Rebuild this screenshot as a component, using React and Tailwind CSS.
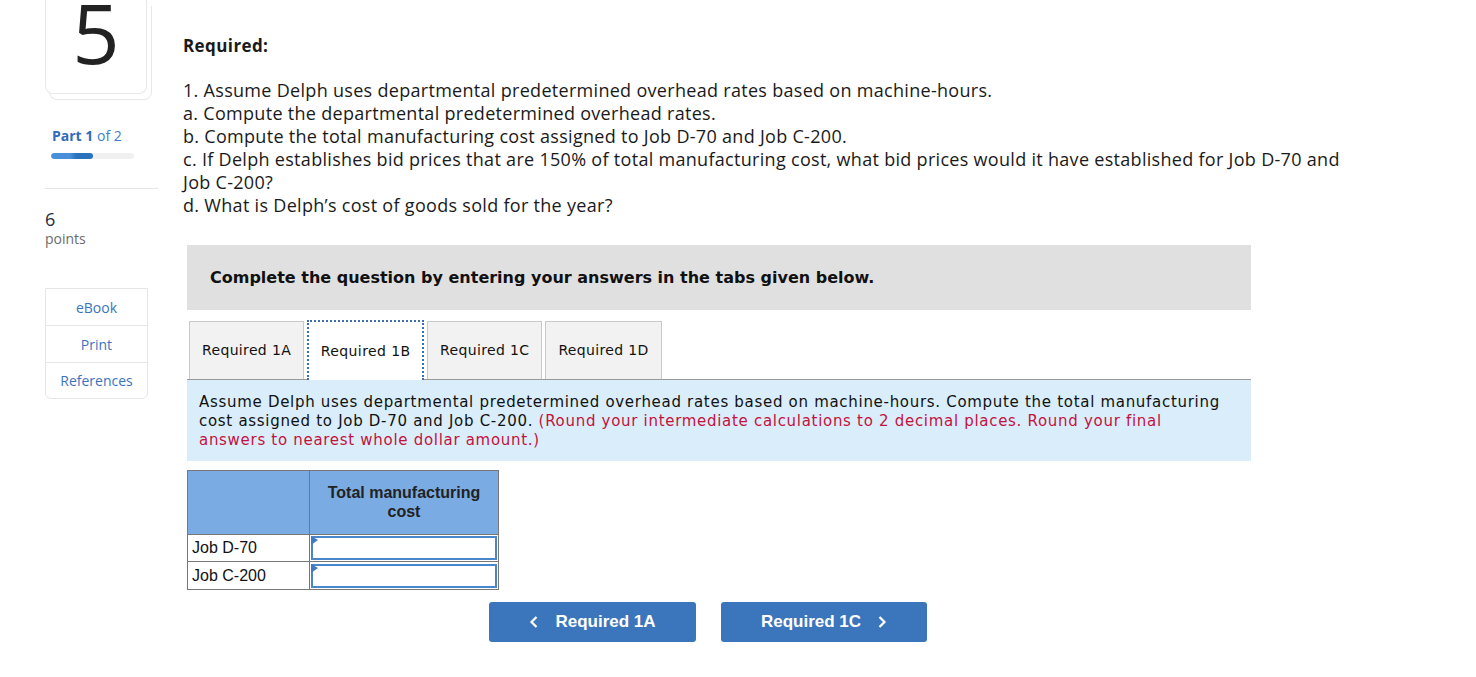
import React from "react";

const proxima = { fontFamily: "'Open Sans', Lato, sans-serif" };

function Sidebar() {
  return (
    <div className="w-[113px] shrink-0 flex flex-col" style={proxima}>
      <div className="relative w-[103px] h-[94px]">
        <div className="absolute left-[4px] top-[6px] w-[103px] h-[94px] border border-t-0 border-[#e8e8e8] rounded-b-[8px] bg-white"></div>
        <div className="absolute left-0 top-0 w-[102px] h-[94px] border border-t-0 border-[#e8e8e8] rounded-b-[8px] bg-white flex items-start justify-center">
          <span className="text-[83px] leading-[64px] text-[#222] font-normal">5</span>
        </div>
      </div>
      <div className="mt-[33px] pl-[7px] text-[14px] leading-[18px] text-[#3d7fcc]">
        <span className="font-bold text-[#2f6cb9]">Part 1</span> of 2
      </div>
      <div className="ml-[6px] mt-[8px] w-[83px] h-[6px] rounded-full bg-[#f0f0f0] overflow-hidden">
        <div className="h-full w-[42px] rounded-full bg-[linear-gradient(90deg,#4a90d9_0%,#4a90d9_45%,#2a72bd_60%,#2a72bd_100%)]"></div>
      </div>
      <div className="mt-[29px] h-px w-[113px] bg-[#e6e6e6]"></div>
      <div className="mt-[19px] text-[18px] leading-[22px] text-[#1f2a44]">6</div>
      <div className="text-[14px] leading-[18px] text-[#6b6b6b]">points</div>
      <div className="mt-[40px] w-[103px] border border-[#e6e6e6] rounded-b-[6px] text-[14px] text-[#3a74c0]">
        <div className="h-[37px] flex items-center justify-center border-b border-[#e6e6e6]">eBook</div>
        <div className="h-[37px] flex items-center justify-center border-b border-[#e6e6e6]">Print</div>
        <div className="h-[35px] flex items-center justify-center">References</div>
      </div>
    </div>
  );
}

function Tab({ label, active }) {
  if (active) {
    return (
      <div className="h-[60px] w-[117px] mb-[-1px] bg-white border-2 border-dotted border-[#3a6fb0] border-b-0 flex items-center justify-center text-[14px] tracking-[0.4px] text-[#111] relative z-10">
        {label}
      </div>
    );
  }
  return (
    <div className="h-[58px] px-[12px] bg-[#f2f2f2] border border-[#c9c9c9] border-b-0 flex items-center justify-center text-[14px] tracking-[0.35px] text-[#111]">
      {label}
    </div>
  );
}

function InputCell() {
  return (
    <td className="p-0 border border-[#777] bg-white">
      <div className="relative h-[24px] m-[1px] border-2 border-[#4a86cc] bg-white">
        <svg className="absolute left-[-2px] top-[-2px]" width="8" height="10" viewBox="0 0 8 10">
          <polygon points="0,0 7,4 0,9" fill="#3f7bc4" />
        </svg>
      </div>
    </td>
  );
}

export default function App() {
  const verdana = { fontFamily: "Verdana, 'DejaVu Sans', sans-serif" };
  const arial = { fontFamily: "'Liberation Sans', Arial, sans-serif" };
  return (
    <div className="w-[1476px] h-[677px] bg-white overflow-hidden flex pl-[45px]">
      <Sidebar />
      <div className="ml-[25px] flex-1 flex flex-col">
        <div style={proxima} className="text-[#1a1a1a]">
          <div className="mt-[34px] text-[17px] leading-[24px] font-bold tracking-[0.4px]">Required:</div>
          <div className="mt-[21px] text-[18px] leading-[23px] tracking-[0.3px] w-[1175px]">
            <div>1. Assume Delph uses departmental predetermined overhead rates based on machine-hours.</div>
            <div>a. Compute the departmental predetermined overhead rates.</div>
            <div>b. Compute the total manufacturing cost assigned to Job D-70 and Job C-200.</div>
            <div>c. If Delph establishes bid prices that are 150% of total manufacturing cost, what bid prices would it have established for Job D-70 and <span className="whitespace-nowrap">Job C-200?</span></div>
            <div>d. What is Delph’s cost of goods sold for the year?</div>
          </div>
        </div>
        <div className="ml-[4px] w-[1064px]" style={verdana}>
          <div className="mt-[28px] h-[65px] bg-[#e0e0e0] flex items-center pl-[23px] text-[16px] font-bold text-[#111]">
            Complete the question by entering your answers in the tabs given below.
          </div>
          <div className="mt-[10px] flex items-end gap-[3px] pl-[2px] border-b border-[#999]">
            <Tab label="Required 1A" />
            <Tab label="Required 1B" active />
            <Tab label="Required 1C" />
            <Tab label="Required 1D" />
          </div>
          <div className="bg-[#daedfa] pt-[13px] pb-[11px] pl-[12px] pr-[20px] text-[15px] leading-[19px] tracking-[0.7px] text-[#111]">
            Assume Delph uses departmental predetermined overhead rates based on machine-hours. Compute the total manufacturing cost assigned to Job D-70 and Job C-200.{" "}
            <span className="text-[#c4123e]">(Round your intermediate calculations to 2 decimal places. Round your final answers to nearest whole dollar amount.)</span>
          </div>
          <table className="mt-[9px] border-collapse" style={arial}>
            <thead>
              <tr className="h-[64px] bg-[#7aabe3]">
                <th className="w-[122px] border border-[#777]"></th>
                <th className="w-[189px] border border-[#777] text-[16px] leading-[19px] font-bold text-[#222] align-top pt-[12px]">
                  Total manufacturing<br />cost
                </th>
              </tr>
            </thead>
            <tbody>
              <tr className="h-[27px]">
                <td className="border border-[#777] text-[16px] leading-[18px] text-[#111] pl-[4px]">Job D-70</td>
                <InputCell />
              </tr>
              <tr className="h-[28px]">
                <td className="border border-[#777] text-[16px] leading-[18px] text-[#111] pl-[4px]">Job C-200</td>
                <InputCell />
              </tr>
            </tbody>
          </table>
          <div className="mt-[12px] flex gap-[25px] pl-[302px]" style={arial}>
            <div className="w-[207px] h-[40px] rounded-[3px] bg-[#3b76bc] text-white text-[17px] font-bold flex items-center justify-center gap-[16px]">
              <svg width="10" height="14" viewBox="0 0 10 14"><path d="M7.5 2 L2.5 7 L7.5 12" stroke="white" strokeWidth="2.2" fill="none" /></svg>
              <span>Required 1A</span>
            </div>
            <div className="w-[206px] h-[40px] rounded-[3px] bg-[#3b76bc] text-white text-[17px] font-bold flex items-center justify-center gap-[16px]">
              <span>Required 1C</span>
              <svg width="10" height="14" viewBox="0 0 10 14"><path d="M2.5 2 L7.5 7 L2.5 12" stroke="white" strokeWidth="2.2" fill="none" /></svg>
            </div>
          </div>
        </div>
      </div>
    </div>
  );
}
